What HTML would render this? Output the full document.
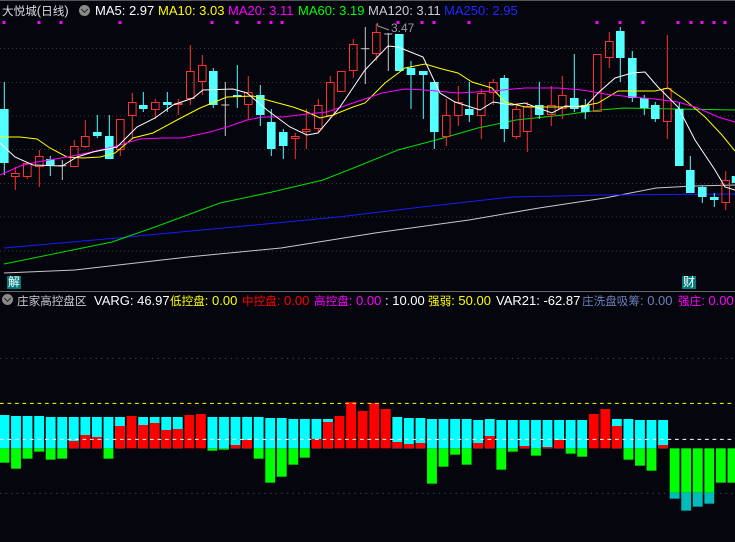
<!DOCTYPE html>
<html><head><meta charset="utf-8">
<style>
html,body{margin:0;padding:0;background:#05050e;width:735px;height:542px;overflow:hidden;}
#w{position:relative;width:735px;height:542px;background:#05050e;font-family:"Liberation Sans","Noto Sans CJK SC",sans-serif;font-size:13px;}
.t{position:absolute;white-space:nowrap;line-height:15px;}
.c{font-size:11.6px;}
svg{position:absolute;left:0;}
.ic{position:absolute;width:11px;height:11px;border-radius:50%;background:#8a8a8a;}
.ic:after{content:"";position:absolute;left:3px;top:2px;width:4px;height:4px;border-right:1.5px solid #222;border-bottom:1.5px solid #222;transform:rotate(45deg);}
.bx{position:absolute;background:#007a7a;color:#fff;font-size:12px;line-height:13px;text-align:center;width:14px;height:13px;}
</style></head><body><div id="w">
<svg id="top" width="735" height="292" style="top:0" viewBox="0 0 735 292"></svg>
<svg id="bot" width="735" height="262" style="top:280px" viewBox="0 0 1568 786" preserveAspectRatio="none"></svg>
<div style="position:absolute;left:0;top:0;width:735px;height:1px;background:#555;"></div>
<div style="position:absolute;left:0;top:291px;width:735px;height:1px;background:#666;"></div>
<span class="t" style="left:2px;top:3px;color:#ddd"><span class="c">大悦城</span>(<span class="c">日线</span>)</span>
<div class="ic" style="left:79px;top:5px"></div>
<span class="t" style="left:95px;top:3px;color:#fff">MA5: 2.97</span>
<span class="t" style="left:158px;top:3px;color:#ffff00">MA10: 3.03</span>
<span class="t" style="left:228px;top:3px;color:#ff00ff">MA20: 3.11</span>
<span class="t" style="left:298px;top:3px;color:#00ff00">MA60: 3.19</span>
<span class="t" style="left:368px;top:3px;color:#ccc">MA120: 3.11</span>
<span class="t" style="left:444px;top:3px;color:#2525ff">MA250: 2.95</span>
<span class="t" style="left:391px;top:21px;color:#999;font-size:12px">3.47</span>
<div class="bx" style="left:7px;top:276px">解</div>
<div class="bx" style="left:682px;top:276px">财</div>
<div class="ic" style="left:2px;top:294px"></div>
<span class="t" style="left:17px;top:293px;color:#ccc"><span class="c">庄家高控盘区</span></span>
<span class="t" style="left:94px;top:293px;color:#fff">VARG: 46.97</span>
<span class="t" style="left:170px;top:293px;color:#ffff00"><span class="c">低控盘</span>: 0.00</span>
<span class="t" style="left:242px;top:293px;color:#ff0000"><span class="c">中控盘</span>: 0.00</span>
<span class="t" style="left:314px;top:293px;color:#ff00ff"><span class="c">高控盘</span>: 0.00</span>
<span class="t" style="left:385px;top:293px;color:#fff">: 10.00</span>
<span class="t" style="left:428px;top:293px;color:#ffff00"><span class="c">强弱</span>: 50.00</span>
<span class="t" style="left:496px;top:293px;color:#fff">VAR21: -62.87</span>
<span class="t" style="left:582px;top:293px;color:#6d7fb8"><span class="c">庄洗盘吸筹</span>: 0.00</span>
<span class="t" style="left:678px;top:293px;color:#ff00ff"><span class="c">强庄</span>: 0.00</span>
</div>
<script>
var NS="http://www.w3.org/2000/svg";
function el(p,n,a){var e=document.createElementNS(NS,n);for(var k in a)e.setAttribute(k,a[k]);p.appendChild(e);return e;}
var T=document.getElementById("top");
[48.5,82.5,116,149.5,183.5,217,251].forEach(function(y){el(T,"line",{x1:0,x2:735,y1:y,y2:y,stroke:"#3a3a3a","stroke-dasharray":"1 3"});});
[4,39,61,120,212,237,259,271,282,398,422,434,469,597,620,643,678,691,702,714,725].forEach(function(x){el(T,"rect",{x:x-1.5,y:21,width:3,height:3,fill:"#ff00ff"});});
function pl(pts,c){el(T,"polyline",{points:pts,fill:"none",stroke:c,"stroke-width":1});}
pl("4,273 75,270 188,257 281,248 375,233 469,220 539,208 605,198 656,188 694,186 735,185","#c8c8c8");
pl("4,248 117,238 234,227 338,217 422,207 511,197 605,195 735,194","#1a1aff");
pl("4,264 112,242 155,227 220,203 272,192 323,180 356,167 398,150 436,140 478,128 516,120 563,115 600,110 624,108 735,110","#00e000");
var C=[[4.3,"C",109,163,82,175],[15.3,"R",173,177,167,190],[27.3,"R",163,177,162,179],[39.3,"R",156,167,150,187],[50.3,"C",159,165,156,176],[62.3,"W",165.7,165.7,160,180],[74.3,"R",146,167,140,167],[85.3,"R",136,147,120,148],[97.3,"C",132,136,115,138],[109.3,"C",136,159,115,159],[120.3,"R",119,150,119,156],[132.3,"R",102,116,93,139],[143.3,"C",105,109,92,112],[155.3,"R",102,110,99,119],[167.3,"C",102,105,92,112],[178.3,"R",103,105,99,115],[190.3,"R",71,99,45,105],[202.3,"R",65,82,55,95],[213.3,"C",71,105,68,108],[225.3,"W",105,105,82,136],[237.3,"C",95,97,65,108],[248.3,"R",92,105,76,119],[260.3,"C",95,115,85,126],[271.3,"C",122,149,109,156],[283.3,"C",132,146,129,159],[295.3,"R",136,139,133,159],[306.3,"R",129,132,109,149],[318.3,"R",105,129,99,132],[330.3,"R",82,116,76,119],[341.3,"R",71,92,71,92],[353.3,"R",44,71,39,78],[365.3,"W",48.7,48.7,27,84],
[376.3,"R",32,54,24,61],[388.3,"W",34,34,33,71],[399.3,"C",34,71,34,71],[411,"C",68,75,61,109],[423.3,"C",71,75,71,119],[434.3,"C",82,132,82,149],[446.3,"R",115,137,99,146],[458.3,"R",102,116,86,126],[469.3,"C",109,115,82,122],[481.3,"R",93,116,89,139],[493.3,"R",82,93,79,105],[504.3,"C",78,129,75,142],[516.3,"R",109,137,103,139],[527.3,"R",106,132,102,152],[539.3,"C",105,115,82,119],[551.3,"R",105,115,86,126],[562.3,"R",95,109,76,119],[574.3,"C",98,109,54,112],[585.3,"C",105,112,99,119],[597.3,"R",54,112,54,112],[609.3,"R",41,58,32,68],[620.3,"C",31,58,27,82],[632.3,"C",58,98,51,102],[644.3,"C",98,108,95,115],[655.3,"C",105,119,102,122],[667.3,"R",88,122,35,139],[679.3,"C",109,166,102,166],[690.3,"C",170,193,156,193],[702.3,"C",187,197,186,203],[714.3,"C",197,200,193,207],[725.7,"R",180,203,171,210],[736,"C",176,183,170,190]];
C.forEach(function(c){var x=c[0],col=c[1]=="R"?"#ff3232":c[1]=="C"?"#54ffff":"#c8c8c8";
 if(c[1]=="R"){el(T,"line",{x1:x,x2:x,y1:c[4],y2:c[2],stroke:col});el(T,"line",{x1:x,x2:x,y1:c[3],y2:c[5],stroke:col});el(T,"rect",{x:x-3.8,y:c[2]+.5,width:7.6,height:Math.max(c[3]-c[2]-1,1),fill:"none",stroke:col,"stroke-width":1});}
 else if(c[1]=="C"){el(T,"line",{x1:x,x2:x,y1:c[4],y2:c[5],stroke:col});el(T,"rect",{x:x-4.3,y:c[2],width:8.6,height:Math.max(c[3]-c[2],2),fill:col});}
 else{el(T,"line",{x1:x,x2:x,y1:c[4],y2:c[5],stroke:col});el(T,"line",{x1:x-4,x2:x+4,y1:c[2],y2:c[2],stroke:col});}
});
pl("0,137 20,137 37,139 50,148 67,157 83,158 100,157 115,153 133,138 153,133 177,120 200,108 227,97 253,96 267,100 293,107 307,112 320,118 333,115 353,107 365,103 385,83 405,68 425,64 442,69 458,73 472,82 492,88 505,102 525,107 545,107 565,107 582,106 598,103 618,91 638,91 655,91 668,88 685,100 705,117 722,135 735,151","#ffff00");
pl("0,175 20,166 37,162 67,157 87,153 113,147 140,139 163,138 182,138 210,132 227,127 247,120 263,117 283,117 307,114 327,112 350,104 365,99 382,93 405,89 425,90 458,93 492,91 525,88 558,88 582,90 605,94 632,97 655,99 678,102 698,108 718,117 735,122","#ff00ff");
pl("0,143 15,157 33,165 62,166 77,157 93,152 117,147 137,127 155,118 173,105 193,98 203,90 233,89 247,93 267,110 290,127 307,135 318,133 340,107 365,70 388,46 398,47 423,57 440,93 455,102 480,110 493,102 512,105 525,103 538,108 552,113 565,106 585,107 598,93 615,78 632,73 645,72 658,87 678,107 695,140 715,170 725,187 735,190","#ffffff");
el(T,"polyline",{points:"389,30 378,26 377,23",fill:"none",stroke:"#999"});
var B=document.getElementById("bot");
[235,640].forEach(function(y){el(B,"line",{x1:0,x2:1568,y1:y,y2:y,stroke:"#444","stroke-width":3,"stroke-dasharray":"3 9"});});
var D=[[405,0,548],[408,0,566],[408,0,536],[408,0,515],[411,0,539],[411,0,536],[411,483,0],[411,465,0],[411,471,0],[411,0,536],[411,438,0],[0,408,0],[411,435,0],[411,429,0],[411,450,0],[411,447,0],[0,405,0],[0,402,0],[411,0,512],[411,0,509],[411,495,0],[411,480,0],[411,0,536],[414,0,608],[414,0,590],[417,0,554],[417,0,533],[417,477,0],[417,426,0],[0,408,0],[0,366,0],[0,393,0],[0,369,0],[0,387,0],[411,486,0],[414,492,0],[414,489,0],[417,0,611],[417,0,560],[417,0,524],[417,0,554],[420,489,0],[417,468,0],[420,0,569],[420,0,515],[420,498,0],[420,0,527],[420,501,0],[420,480,0],[420,0,521],[420,0,530],[0,402,0],[0,387,0],[417,438,0],[417,0,539],[420,0,557],[420,0,572],[420,495,0],[0,0,638,656],[0,0,638,692],[0,0,638,680],[0,0,638,671],[0,0,608],[0,0,608]];
D.forEach(function(d,i){var x=i*24.65-1,w=21;
 if(d[0])el(B,"rect",{x:x,y:d[0],width:w,height:505-d[0],fill:"#00ffff"});
 if(d[1])el(B,"rect",{x:x,y:d[1],width:w,height:505-d[1],fill:"#ff0000"});
 if(d[2])el(B,"rect",{x:x,y:505,width:w,height:d[2]-505,fill:"#00ff00"});
 if(d[3])el(B,"rect",{x:x,y:638,width:w,height:d[3]-638,fill:"#00bcbc"});
});
el(B,"line",{x1:0,x2:1568,y1:478,y2:478,stroke:"#fff","stroke-width":3,"stroke-dasharray":"8 8"});
el(B,"line",{x1:0,x2:1568,y1:370,y2:370,stroke:"#ffff00","stroke-width":3,"stroke-dasharray":"8 8"});
</script>
</body></html>
